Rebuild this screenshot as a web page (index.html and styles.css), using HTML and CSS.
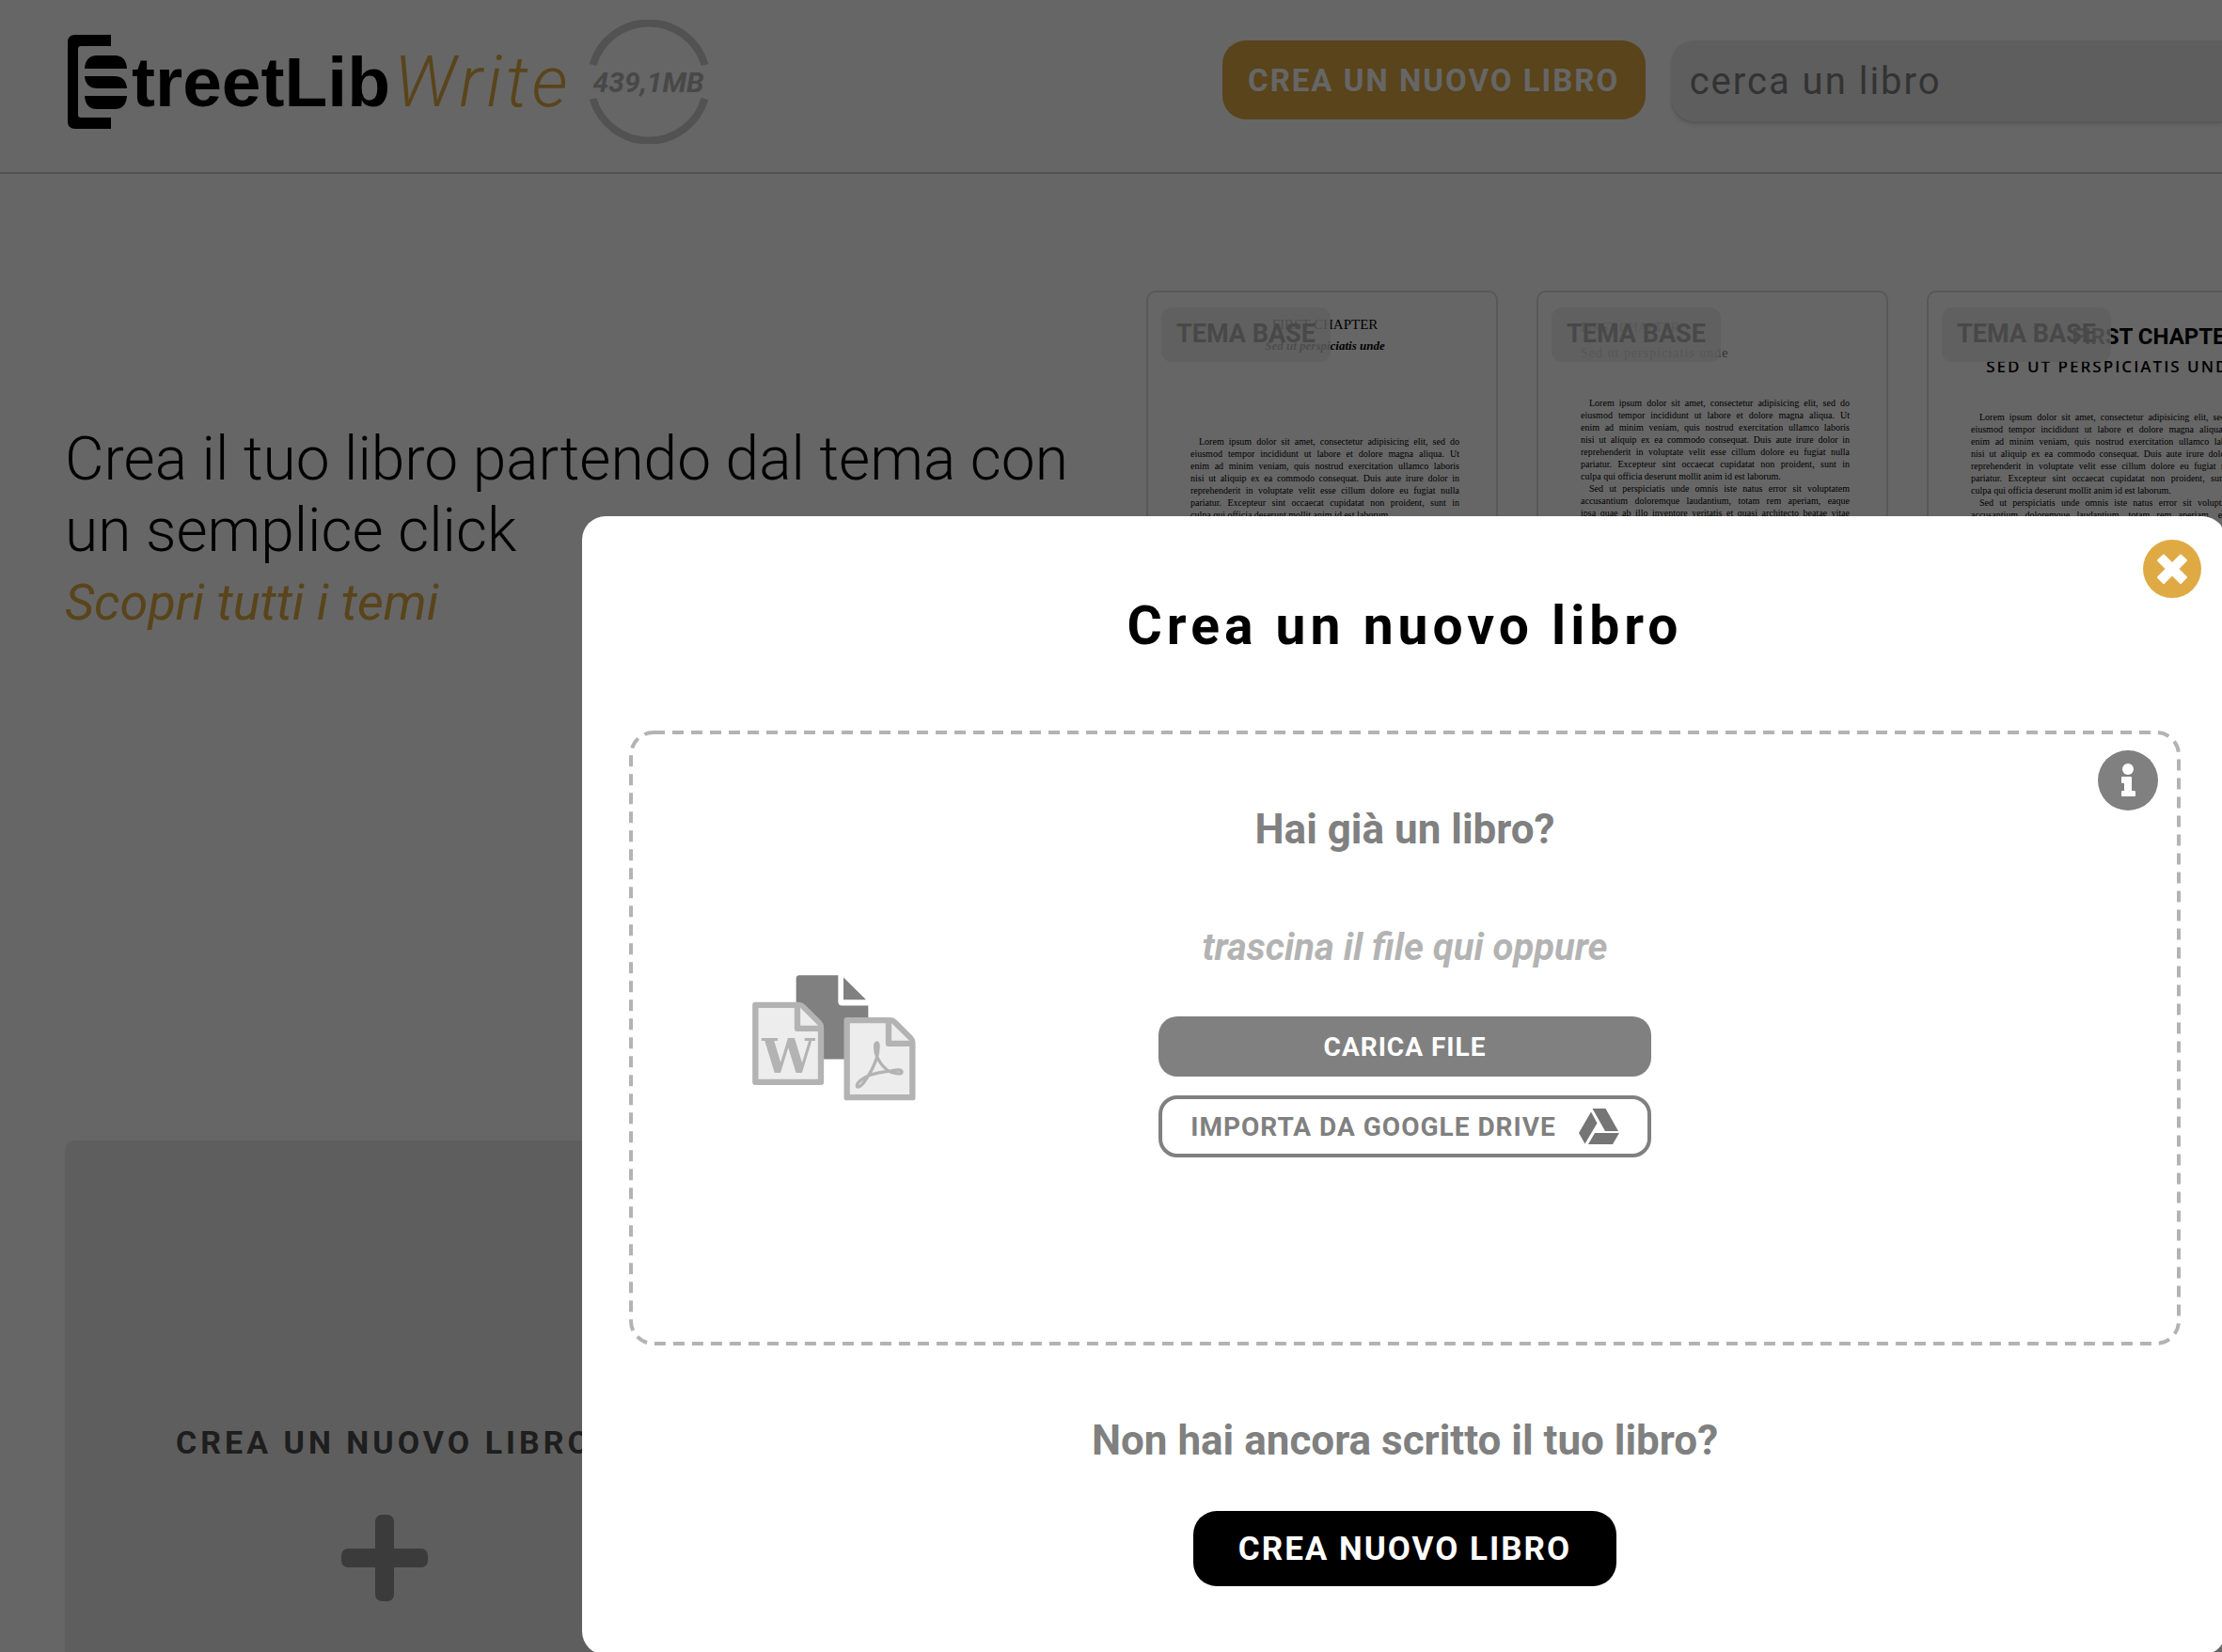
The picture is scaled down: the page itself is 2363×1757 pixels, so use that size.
FILE: index.html
```html
<!DOCTYPE html>
<html lang="it">
  <head>
    <meta charset="UTF-8" />
    <meta name="viewport" content="width=device-width, initial-scale=1.0" />
    <title>StreetLib Write</title>
    <link rel="stylesheet" href="styles.css">
  </head>
  <body>
    <header class="header">
      <div class="brand">
        <a class="logo" href="#" aria-label="StreetLib Write">
          <svg class="logo-mark" width="64" height="100" viewBox="0 0 64 100">
            <path d="M46 0v12H14q-3 0-3 3v70q0 3 3 3h32v12H8q-8 0-8-8V8q0-8 8-8z" />
            <path d="M18 36q1-14 13-14h19q12 0 13 14zM18 44h31q13 0 14 13H32q-13 0-14-13zM18 65h45q-1 14-13 14H31q-12 0-13-14z" />
          </svg>
          <span class="logo-name">treetLib</span>
          <span class="logo-product">Write</span>
        </a>
        <div class="quota">
          <svg class="quota-ring" width="132" height="132" viewBox="0 0 132 132">
            <path d="M6.500 48a62 62 0 0 1 119 0M6.500 84a62 62 0 0 0 119 0" />
          </svg>
          <span class="quota-label">439,1MB</span>
        </div>
      </div>
      <div class="actions">
        <button type="button" class="btn btn-accent">CREA UN NUOVO LIBRO</button>
        <input type="search" class="search" placeholder="cerca un libro" aria-label="cerca un libro" />
      </div>
    </header>

    <main>
      <section class="hero">
        <div class="hero-text">
          <p class="hero-title">Crea il tuo libro partendo dal tema con un semplice click</p>
          <a class="hero-link" href="#">Scopri tutti i temi</a>
        </div>
        <div class="themes">
          <article class="theme theme-classic">
            <span class="badge">TEMA BASE</span>
            <h3>FIRST CHAPTER</h3>
            <h4>Sed ut perspiciatis unde</h4>
            <div class="theme-body">
              <p>
                Lorem ipsum dolor sit amet, consectetur adipisicing elit, sed do<br />
                eiusmod tempor incididunt ut labore et dolore magna aliqua. Ut<br />
                enim ad minim veniam, quis nostrud exercitation ullamco laboris<br />
                nisi ut aliquip ex ea commodo consequat. Duis aute irure dolor in<br />
                reprehenderit in voluptate velit esse cillum dolore eu fugiat nulla<br />
                pariatur. Excepteur sint occaecat cupidatat non proident, sunt in
                <span class="last-line">culpa qui officia deserunt mollit anim id est laborum.</span>
              </p>
            </div>
          </article>
          <article class="theme theme-left">
            <span class="badge">TEMA BASE</span>
            <h3>FIRST CHAPTER</h3>
            <h4>Sed ut perspiciatis unde</h4>
            <div class="theme-body">
              <p>
                Lorem ipsum dolor sit amet, consectetur adipisicing elit, sed do<br />
                eiusmod tempor incididunt ut labore et dolore magna aliqua. Ut<br />
                enim ad minim veniam, quis nostrud exercitation ullamco laboris<br />
                nisi ut aliquip ex ea commodo consequat. Duis aute irure dolor in<br />
                reprehenderit in voluptate velit esse cillum dolore eu fugiat nulla<br />
                pariatur. Excepteur sint occaecat cupidatat non proident, sunt in
                <span class="last-line">culpa qui officia deserunt mollit anim id est laborum.</span>
              </p>
              <p>
                Sed ut perspiciatis unde omnis iste natus error sit voluptatem<br />
                accusantium doloremque laudantium, totam rem aperiam, eaque<br />
                ipsa quae ab illo inventore veritatis et quasi architecto beatae vitae
              </p>
            </div>
          </article>
          <article class="theme theme-modern">
            <span class="badge">TEMA BASE</span>
            <h3>FIRST CHAPTER</h3>
            <h4>SED UT PERSPICIATIS UNDE</h4>
            <div class="theme-body">
              <p>
                Lorem ipsum dolor sit amet, consectetur adipisicing elit, sed do<br />
                eiusmod tempor incididunt ut labore et dolore magna aliqua. Ut<br />
                enim ad minim veniam, quis nostrud exercitation ullamco laboris<br />
                nisi ut aliquip ex ea commodo consequat. Duis aute irure dolor in<br />
                reprehenderit in voluptate velit esse cillum dolore eu fugiat nulla<br />
                pariatur. Excepteur sint occaecat cupidatat non proident, sunt in
                <span class="last-line">culpa qui officia deserunt mollit anim id est laborum.</span>
              </p>
              <p>
                Sed ut perspiciatis unde omnis iste natus error sit voluptatem<br />
                accusantium doloremque laudantium, totam rem aperiam, eaque
              </p>
            </div>
          </article>
        </div>
      </section>

      <section class="library">
        <button type="button" class="new-book">
          <span>CREA UN NUOVO LIBRO</span>
          <svg width="92" height="92" viewBox="0 0 92 92">
            <rect x="36" width="20" height="92" rx="7" />
            <rect y="36" width="92" height="20" rx="7" />
          </svg>
        </button>
      </section>
    </main>

    <div class="overlay">
      <div class="modal" role="dialog" aria-modal="true" aria-labelledby="modal-title">
        <button type="button" class="close" aria-label="Chiudi">
          <svg width="62" height="62" viewBox="0 0 62 62">
            <circle cx="31" cy="31" r="31" fill="#dfaa44" />
            <path d="M15.500 21l5.500-5q1-1 2 0l8 8 8-8q1-1 2 0l5.500 5q1 1 0 2l-8 8 8 8q1 1 0 2l-5.500 5.500q-1 1-2 0l-8-8-8 8q-1 1-2 0l-5.500-5.500q-1-1 0-2l8-8-8-8q-1-1 0-2z" fill="#fff" />
          </svg>
        </button>
        <h1 class="modal-title" id="modal-title">Crea un nuovo libro</h1>

        <div class="dropzone">
          <svg class="dropzone-border" width="100%" height="100%">
            <rect x="2" y="2" rx="24" />
          </svg>
          <svg class="files" width="174" height="134" viewBox="119 113 522 401">
            <path d="M269 113h124v85q0 12 12 12h84v171H259V124q0-11 10-11z" fill="#808080" />
            <path d="M410 120l72 71h-72z" fill="#808080" />
            <g fill="#ededed" stroke="#b3b3b3" stroke-width="19" stroke-linejoin="round">
              <path d="M129 208h138q8 0 15 7l49 49q7 7 7 15v175H129z" />
              <path d="M263 208v75h75" />
              <path d="M421 257h138q8 0 15 7l49 49q7 7 7 15v175H421z" />
              <path d="M554 257v74h75" />
            </g>
            <text class="files-letter" x="234" y="425" text-anchor="middle">W</text>
            <path d="M517 328c-10 0-6 32 0 45 12 27 26 41 46 50 15 5 33 6 33-1 0-9-18-7-34-4-24 3-48 7-68 14-14 5-41 21-41 34 0 10 14 0 22-11 16-22 32-50 41-78 5-20 8-49 1-49z" fill="none" stroke="#b3b3b3" stroke-width="10" stroke-linejoin="round" />
          </svg>
          <div class="upload">
            <h2>Hai già un libro?</h2>
            <p class="upload-hint">trascina il file qui oppure</p>
            <button type="button" class="btn-small">CARICA FILE</button>
            <button type="button" class="btn-small btn-outline">
              IMPORTA DA GOOGLE DRIVE
              <svg width="43" height="38" viewBox="0 0 43 38">
                <path d="M13 3.500l6.500 12L6.500 37.500 0 26zM14.500 0h14l13.500 24H28zM17 26h26l-7 12H10z" />
              </svg>
            </button>
          </div>
          <button type="button" class="info" aria-label="Informazioni">
            <svg width="64" height="64" viewBox="0 0 64 64">
              <circle cx="32" cy="32" r="32" fill="#808080" />
              <circle cx="32" cy="20" r="6" fill="#fff" />
              <path d="M26 28h9q1 0 1 1v14h2q2 0 2 1v4q0 1-1 1H26q-1 0-1-1v-4q0-1 1-1h2v-8h-2q-1 0-1-1v-5q0-1 1-1z" fill="#fff" />
            </svg>
          </button>
        </div>

        <div class="create">
          <h2>Non hai ancora scritto il tuo libro?</h2>
          <button type="button" class="btn btn-dark">CREA NUOVO LIBRO</button>
        </div>
      </div>
    </div>
  </body>
</html>
```
FILE: styles.css
```css
* {
  box-sizing: border-box;
}
body {
  margin: 0;
  height: 100vh;
  overflow: hidden;
  font-family: Roboto, sans-serif;
  background: #fff;
  color: #000;
}
h1,
h2,
h3,
h4,
p {
  margin: 0;
}
button {
  font-family: inherit;
  padding: 0;
  border: none;
  background: none;
  cursor: pointer;
}
svg {
  display: block;
}

/* header */
.header {
  display: grid;
  grid-template-columns: 55% 1fr;
  align-items: center;
  padding: 21px 0 30px;
  border-bottom: 2px solid #cdcdcd;
}
.brand {
  display: flex;
  align-items: center;
  gap: 16px;
  padding-left: 72px;
}
.logo {
  display: flex;
  align-items: center;
  gap: 4px;
  color: #000;
  text-decoration: none;
  line-height: 100px;
}
.logo-name {
  font-family: "Liberation Sans", sans-serif;
  font-weight: 700;
  font-size: 75px;
}
.logo-product {
  font-size: 76px;
  font-style: italic;
  font-weight: 300;
  letter-spacing: 4px;
  color: #dfaa44;
}
.quota {
  display: grid;
  place-items: center;
}
.quota > * {
  grid-area: 1 / 1;
}
.quota-ring {
  fill: none;
  stroke: #cdcdcd;
  stroke-width: 8;
}
.quota-label {
  font-size: 30px;
  font-style: italic;
  font-weight: 700;
  color: #b3b3b3;
}
.actions {
  display: flex;
  align-items: flex-start;
  gap: 27px;
}
.btn {
  width: 450px;
  height: 80px;
  border-radius: 25px;
  color: #fff;
  font-size: 35px;
  font-weight: 700;
  letter-spacing: 2px;
}
.btn-accent {
  height: 84px;
  background: #dfaa44;
  font-size: 33px;
}
.btn-dark {
  background: #000;
}
.search {
  flex: 1;
  height: 88px;
  padding: 0 20px 2px;
  border: none;
  border-radius: 25px 0 0 25px;
  background: #ebebeb;
  box-shadow: inset 0 -2px 0 #dcdcdc, 0 2px 4px rgba(0, 0, 0, 0.1);
  font-family: inherit;
  font-size: 40px;
  letter-spacing: 2px;
}
.search::placeholder {
  color: #808080;
}

/* hero */
.hero {
  display: flex;
  align-items: center;
  padding: 124px 0 0 69px;
}
.hero-text {
  flex: 0 0 1150px;
}
.hero-title {
  font-size: 64px;
  font-weight: 300;
  line-height: 76px;
}
.hero-link {
  display: block;
  font-size: 54px;
  font-style: italic;
  line-height: 76px;
  color: #dfaa44;
  text-decoration: none;
}
.themes {
  display: flex;
  gap: 41px;
}
.theme {
  position: relative;
  flex: none;
  width: 374px;
  height: 512px;
  padding: 24px 39px 0 45px;
  overflow: hidden;
  border: 2px solid #dcdcdc;
  border-radius: 10px;
  font-family: "Liberation Serif", serif;
}
.badge {
  position: absolute;
  top: 16px;
  left: 14px;
  padding: 0 16px 2px;
  border-radius: 11px;
  background: rgba(238, 238, 238, 0.8);
  color: #b3b3b3;
  font-family: Roboto, sans-serif;
  font-size: 27px;
  font-weight: 700;
  line-height: 56px;
}
.theme h3 {
  font-size: 15px;
  font-weight: 400;
  line-height: 20px;
}
.theme h4 {
  font-size: 13px;
  line-height: 26px;
}
.theme-body {
  font-size: 10px;
  line-height: 13px;
  text-align: justify;
  text-align-last: justify;
}
.theme-body p {
  text-indent: 9px;
}
.last-line {
  display: block;
  text-align-last: left;
  text-indent: 0;
}
.theme-classic {
  text-align: center;
}
.theme-classic h4 {
  font-style: italic;
}
.theme-classic .theme-body {
  margin-top: 82px;
}
.theme-left {
  padding-top: 28px;
}
.theme-left h3,
.theme-left h4 {
  font-size: 14px;
  color: #808080;
}
.theme-left h4 {
  font-weight: 400;
  letter-spacing: 1px;
  line-height: 34px;
}
.theme-left .theme-body {
  margin-top: 29px;
}
.theme-modern {
  text-align: right;
}
.theme-modern h3 {
  font-family: Roboto, sans-serif;
  font-size: 24px;
  font-weight: 700;
  line-height: 46px;
}
.theme-modern h4 {
  font-family: "Open Sans", sans-serif;
  font-size: 17px;
  font-weight: 600;
  letter-spacing: 2px;
  line-height: 18px;
  white-space: nowrap;
}
.theme-modern .theme-body {
  margin-top: 38px;
}

/* library */
.library {
  padding: 392px 69px 0;
}
.new-book {
  display: flex;
  flex-direction: column;
  align-items: center;
  gap: 54px;
  width: 680px;
  padding: 298px 0;
  border-radius: 10px;
  background: #ebebeb;
  color: #4d4d4d;
  font-size: 34px;
  font-weight: 700;
  letter-spacing: 4px;
  line-height: 46px;
}
.new-book svg {
  fill: #949494;
}

/* modal */
.overlay {
  position: fixed;
  inset: 0;
  padding: 549px 0 0 619px;
  overflow: hidden;
  background: rgba(0, 0, 0, 0.6);
}
.modal {
  position: relative;
  width: calc(100% + 4px);
  padding: 84px 48px 73px 50px;
  border-radius: 25px;
  background: #fff;
  text-align: center;
}
.modal h2 {
  font-size: 44px;
  font-weight: 700;
  line-height: 52px;
  color: #808080;
}
.close {
  position: absolute;
  top: 25px;
  right: 26px;
}
.modal-title {
  margin-bottom: 78px;
  font-size: 57px;
  font-weight: 700;
  letter-spacing: 5px;
  line-height: 66px;
}
.dropzone {
  position: relative;
  display: grid;
  grid-template-columns: 1fr 524px 1fr;
}
.dropzone-border {
  position: absolute;
  inset: 0;
  pointer-events: none;
}
.dropzone-border rect {
  width: calc(100% - 4px);
  height: calc(100% - 4px);
  fill: none;
  stroke: #b3b3b3;
  stroke-width: 4;
  stroke-dasharray: 12 8;
}
.files {
  align-self: center;
  margin-left: 131px;
}
.files-letter {
  font-family: "DejaVu Serif", serif;
  font-size: 150px;
  font-weight: 700;
  fill: #b3b3b3;
}
.upload {
  display: flex;
  flex-direction: column;
  padding: 79px 0 200px;
}
.upload-hint {
  margin: 76px 0 49px;
  font-size: 40px;
  font-style: italic;
  font-weight: 700;
  line-height: 48px;
  color: #b3b3b3;
}
.btn-small {
  display: flex;
  align-items: center;
  justify-content: center;
  gap: 24px;
  height: 64px;
  border-radius: 20px;
  background: #808080;
  color: #fff;
  font-size: 28px;
  font-weight: 700;
  letter-spacing: 1px;
}
.btn-outline {
  height: 66px;
  margin-top: 20px;
  border: 4px solid #808080;
  background: #fff;
  color: #808080;
}
.btn-outline svg {
  fill: #757575;
}
.info {
  align-self: start;
  justify-self: end;
  margin: 21px 24px 0 0;
}
.create {
  padding-top: 75px;
}
.create h2 {
  margin-bottom: 49px;
}
```
